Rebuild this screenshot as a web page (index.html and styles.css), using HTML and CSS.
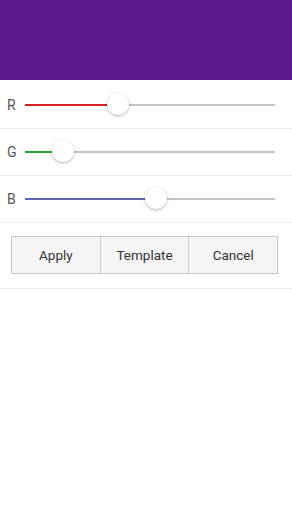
FILE: index.html
```html
<!DOCTYPE html>
<html>
<head>
<meta charset="utf-8">
<link rel="stylesheet" href="styles.css">
</head>
<body>
<div class="header"></div>
<div class="row first">
  <span class="label">R</span>
  <div class="slider">
    <div class="fill red" style="width:93px"></div>
    <div class="rest"></div>
    <div class="thumb" style="left:82px"></div>
  </div>
</div>
<div class="row">
  <span class="label">G</span>
  <div class="slider">
    <div class="fill green" style="width:38px"></div>
    <div class="rest"></div>
    <div class="thumb" style="left:27px"></div>
  </div>
</div>
<div class="row">
  <span class="label">B</span>
  <div class="slider">
    <div class="fill blue" style="width:132px"></div>
    <div class="rest"></div>
    <div class="thumb" style="left:120px"></div>
  </div>
</div>
<div class="panel">
  <div class="buttons">
    <button class="btn">Apply</button>
    <button class="btn">Template</button>
    <button class="btn">Cancel</button>
  </div>
</div>
</body>
</html>
```
FILE: styles.css
```css
html, body { margin: 0; padding: 0; background: #fff; }
body { font-family: Roboto, "Noto Sans", sans-serif; width: 292px; }
.header { height: 80px; background: #5a1a8b; }
.row {
  height: 46px;
  box-sizing: content-box;
  border-bottom: 1px solid #ececec;
  display: flex;
  align-items: center;
  padding: 0 17px 0 7px;
  gap: 8px;
}
.row.first { height: 47px; padding-top: 1px; }
.label { font-size: 14px; color: #555; width: 10px; }
.slider {
  flex: 1;
  position: relative;
  display: flex;
  align-items: center;
  height: 24px;
}
.fill { height: 2px; }
.red { background: #d32020; }
.green { background: #22a838; }
.blue { background: #5c64b4; }
.rest { flex: 1; height: 2px; background: #c4c4c4; }
.thumb {
  position: absolute;
  top: 0;
  width: 22px;
  height: 22px;
  border-radius: 50%;
  background: #fff;
  box-shadow: 0 1px 3px rgba(0,0,0,0.3);
}
.panel {
  border-bottom: 1px solid #ececec;
  padding: 13px 14px 14px 11px;
}
.buttons { display: flex; border: 1px solid #c8c8c8; }
.btn {
  flex: 1;
  height: 36px;
  background: #f5f5f5;
  border: none;
  border-left: 1px solid #d0d0d0;
  font-family: Roboto, "Noto Sans", sans-serif;
  font-size: 13.5px;
  color: #333;
  padding: 0;
}
.btn:first-child { border-left: none; }
```
